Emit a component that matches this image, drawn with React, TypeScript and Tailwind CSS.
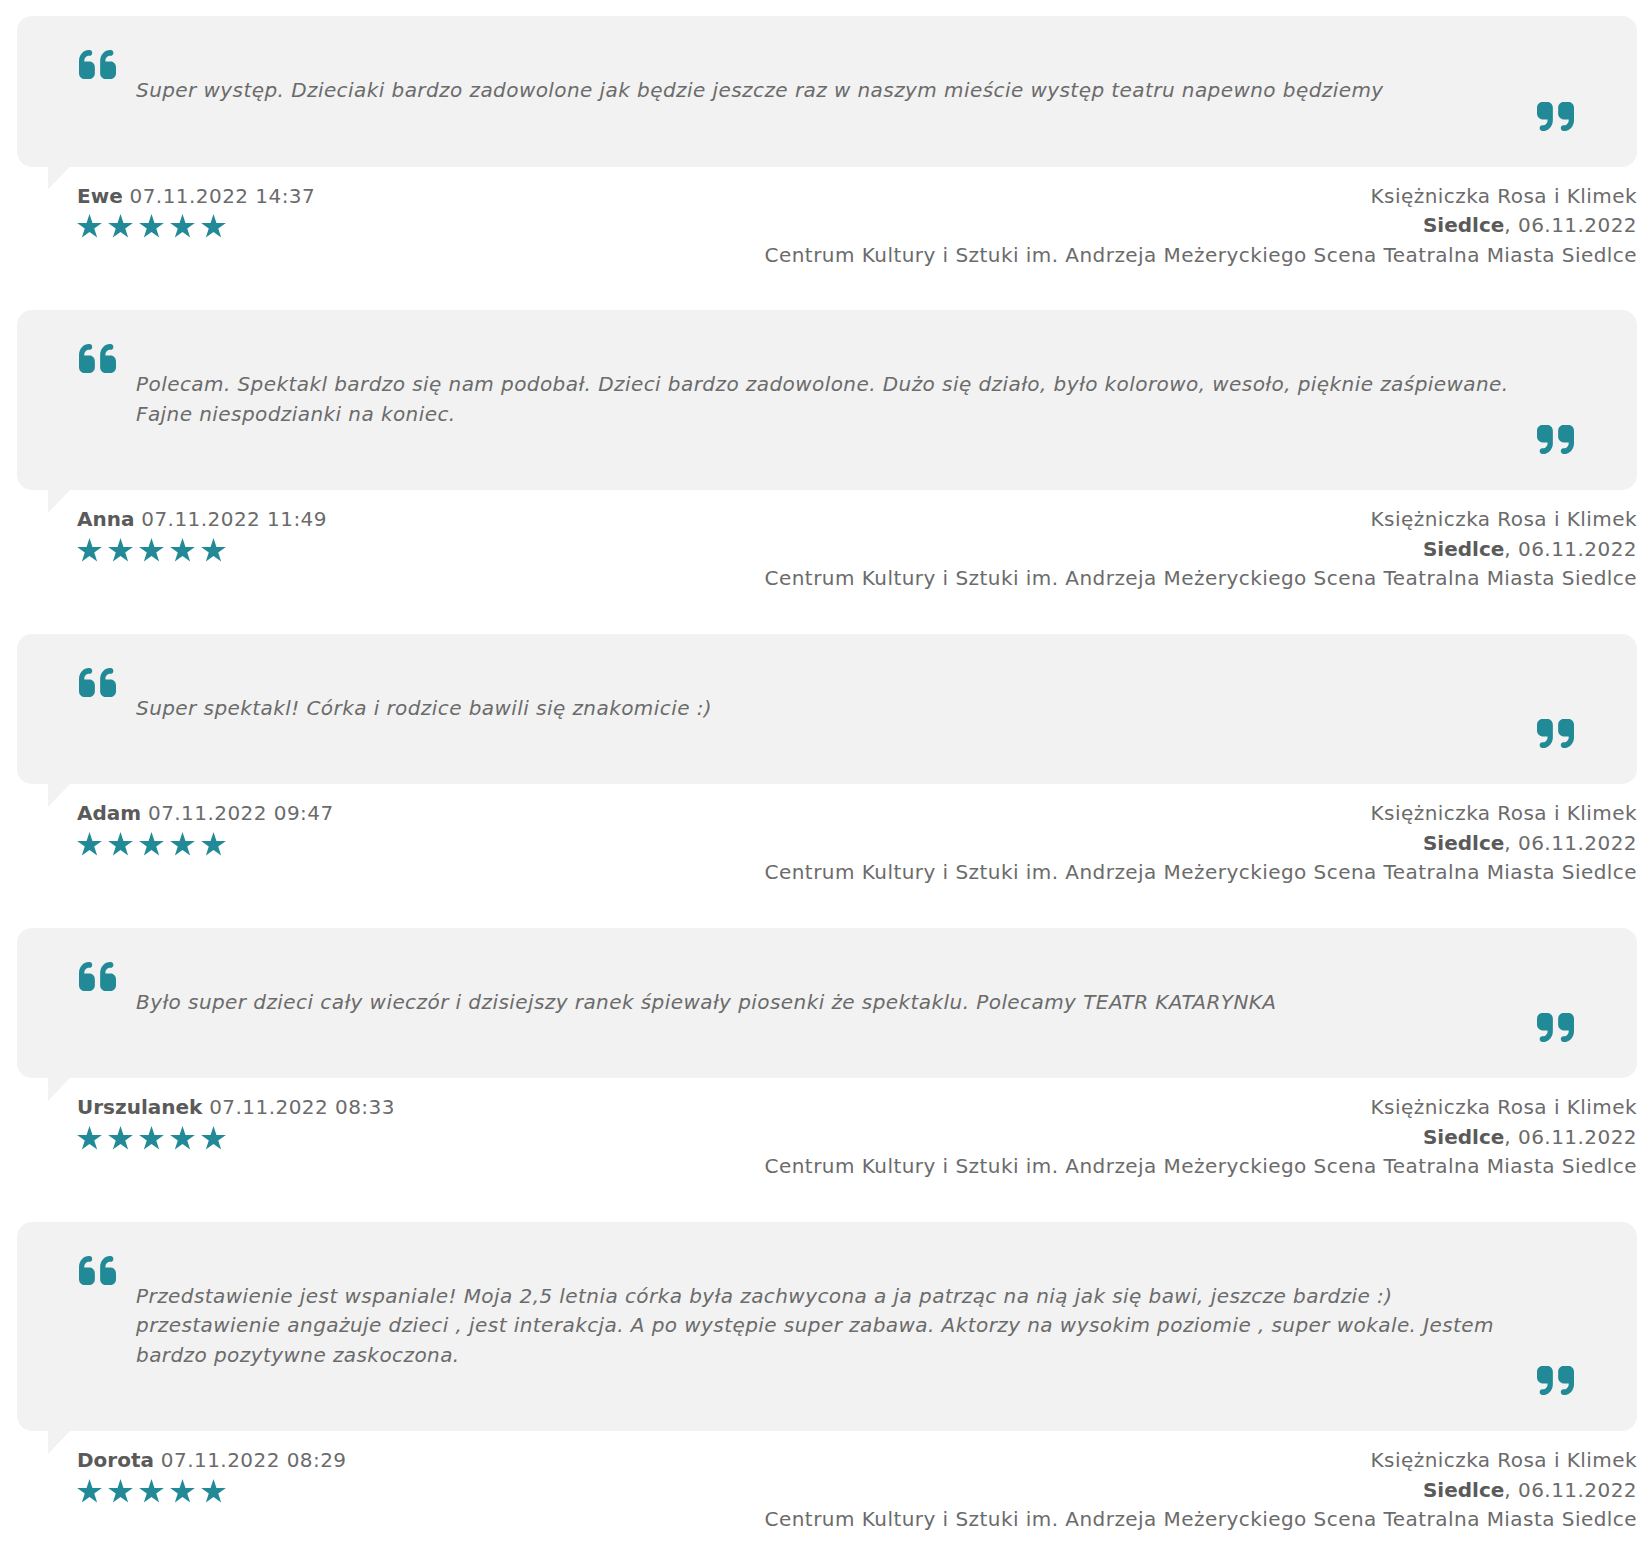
const reviews = [
  {
    name: "Ewe",
    date: "07.11.2022 14:37",
    text: "Super występ. Dzieciaki bardzo zadowolone jak będzie jeszcze raz w naszym mieście występ teatru napewno będziemy",
  },
  {
    name: "Anna",
    date: "07.11.2022 11:49",
    text: "Polecam. Spektakl bardzo się nam podobał. Dzieci bardzo zadowolone. Dużo się działo, było kolorowo, wesoło, pięknie zaśpiewane. Fajne niespodzianki na koniec.",
  },
  {
    name: "Adam",
    date: "07.11.2022 09:47",
    text: "Super spektakl! Córka i rodzice bawili się znakomicie :)",
  },
  {
    name: "Urszulanek",
    date: "07.11.2022 08:33",
    text: "Było super dzieci cały wieczór i dzisiejszy ranek śpiewały piosenki że spektaklu. Polecamy TEATR KATARYNKA",
  },
  {
    name: "Dorota",
    date: "07.11.2022 08:29",
    text: "Przedstawienie jest wspaniale! Moja 2,5 letnia córka była zachwycona a ja patrząc na nią jak się bawi, jeszcze bardzie :) przestawienie angażuje dzieci , jest interakcja. A po występie super zabawa. Aktorzy na wysokim poziomie , super wokale. Jestem bardzo pozytywne zaskoczona.",
  },
];

function QuoteLeft() {
  return (
    <svg viewBox="0 96 448 320" preserveAspectRatio="none" className="w-[37px] h-[29px] fill-[#228a96]">
      <path d="M0 216C0 149.7 53.7 96 120 96h8c17.7 0 32 14.3 32 32s-14.3 32-32 32h-8c-30.9 0-56 25.1-56 56v8h64c35.3 0 64 28.7 64 64v64c0 35.3-28.7 64-64 64H64c-35.3 0-64-28.7-64-64V320 288 216zm256 0c0-66.3 53.7-120 120-120h8c17.7 0 32 14.3 32 32s-14.3 32-32 32h-8c-30.9 0-56 25.1-56 56v8h64c35.3 0 64 28.7 64 64v64c0 35.3-28.7 64-64 64H320c-35.3 0-64-28.7-64-64V320 288 216z" />
    </svg>
  );
}

function QuoteRight() {
  return (
    <svg viewBox="0 96 448 320" preserveAspectRatio="none" className="w-[37px] h-[29px] fill-[#228a96]">
      <path d="M448 296c0 66.3-53.7 120-120 120h-8c-17.7 0-32-14.3-32-32s14.3-32 32-32h8c30.9 0 56-25.1 56-56v-8H320c-35.3 0-64-28.7-64-64V160c0-35.3 28.7-64 64-64h64c35.3 0 64 28.7 64 64v32 32 72zm-256 0c0 66.3-53.7 120-120 120H64c-17.7 0-32-14.3-32-32s14.3-32 32-32h8c30.9 0 56-25.1 56-56v-8H64c-35.3 0-64-28.7-64-64V160c0-35.3 28.7-64 64-64h64c35.3 0 64 28.7 64 64v32 32 72z" />
    </svg>
  );
}

function Star() {
  return (
    <svg viewBox="0 0 24 23" className="w-[25px] h-[24px] fill-[#228a96]">
      <path d="M12 0l2.82 8.6h9.06l-7.33 5.33 2.8 8.62L12 17.22l-7.35 5.33 2.8-8.62L.12 8.6h9.06z" />
    </svg>
  );
}

export default function App() {
  return (
    <main
      className="min-h-screen bg-white pt-[16px] pl-[17px] pr-[13px] text-[20px] leading-[29.5px] text-[#6b6b6b]"
      style={{ fontFamily: '"DejaVu Sans", "Open Sans", sans-serif' }}
    >
      {reviews.map((r) => (
        <div key={r.name} className="mb-[40px]">
          {/* dymek z opinią */}
          <div className="relative rounded-[15px] bg-[#f2f2f2] pt-[34px] pb-[36px] pl-[62px] pr-[63px]">
            <QuoteLeft />
            <p className="mt-[-3px] ml-[57px] mr-[46px] italic tracking-[0.43px]">{r.text}</p>
            <div className="mt-[-4px] flex justify-end">
              <QuoteRight />
            </div>
            <div className="absolute left-[31px] top-full w-[22px] h-[23px] bg-[#f2f2f2] [clip-path:polygon(0_0,100%_0,0_100%)]" />
          </div>

          {/* autor i spektakl */}
          <div className="mt-[15px] flex justify-between tracking-[0.45px]">
            <div className="ml-[60px]">
              <div>
                <span className="font-semibold text-[#5a5a5a] tracking-normal">{r.name}</span> {r.date}
              </div>
              <div className="mt-[3px] flex gap-[6px]">
                {[0, 1, 2, 3, 4].map((i) => (
                  <Star key={i} />
                ))}
              </div>
            </div>
            <div className="text-right">
              <div>Księżniczka Rosa i Klimek</div>
              <div>
                <span className="font-semibold text-[#5a5a5a] tracking-normal">Siedlce</span>, 06.11.2022
              </div>
              <div>Centrum Kultury i Sztuki im. Andrzeja Meżeryckiego Scena Teatralna Miasta Siedlce</div>
            </div>
          </div>
        </div>
      ))}
    </main>
  );
}
